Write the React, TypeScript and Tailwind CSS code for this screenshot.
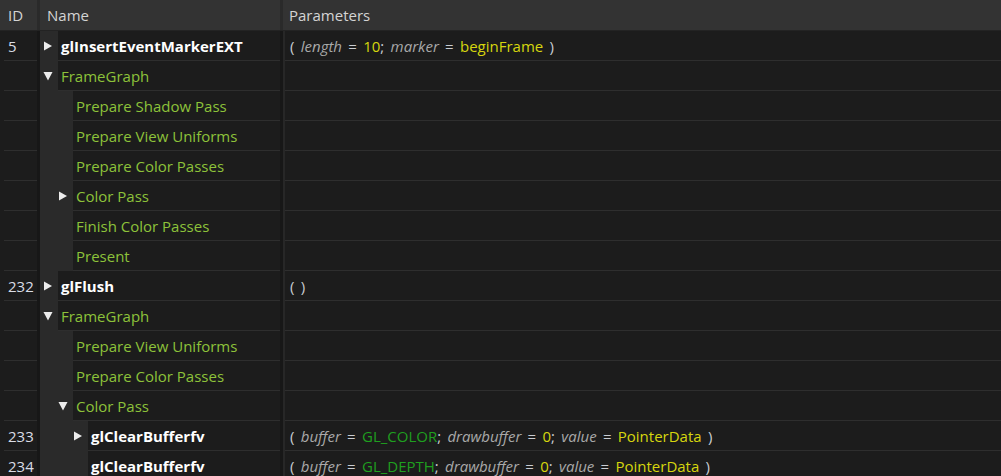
import React from 'react';

type Tok = { t: string; c: 'op' | 'arg' | 'num' | 'enum' };

type Row = {
  id?: string;
  level: number;
  arrow?: 'right' | 'down';
  name: string;
  call?: boolean;
  params?: Tok[];
};

const op = (t: string): Tok => ({ t, c: 'op' });
const arg = (t: string): Tok => ({ t, c: 'arg' });
const num = (t: string): Tok => ({ t, c: 'num' });
const en = (t: string): Tok => ({ t, c: 'enum' });

const clearParams = (buf: string): Tok[] => [
  op('( '), arg('buffer'), op(' = '), en(buf), op('; '), arg('drawbuffer'), op(' = '), num('0'), op('; '),
  arg('value'), op(' = '), num('PointerData'), op(' )'),
];

const ROWS: Row[] = [
  {
    id: '5', level: 0, arrow: 'right', name: 'glInsertEventMarkerEXT', call: true,
    params: [op('( '), arg('length'), op(' = '), num('10'), op('; '), arg('marker'), op(' = '), num('beginFrame'), op(' )')],
  },
  { level: 0, arrow: 'down', name: 'FrameGraph' },
  { level: 1, name: 'Prepare Shadow Pass' },
  { level: 1, name: 'Prepare View Uniforms' },
  { level: 1, name: 'Prepare Color Passes' },
  { level: 1, arrow: 'right', name: 'Color Pass' },
  { level: 1, name: 'Finish Color Passes' },
  { level: 1, name: 'Present' },
  { id: '232', level: 0, arrow: 'right', name: 'glFlush', call: true, params: [op('( )')] },
  { level: 0, arrow: 'down', name: 'FrameGraph' },
  { level: 1, name: 'Prepare View Uniforms' },
  { level: 1, name: 'Prepare Color Passes' },
  { level: 1, arrow: 'down', name: 'Color Pass' },
  { id: '233', level: 2, arrow: 'right', name: 'glClearBufferfv', call: true, params: clearParams('GL_COLOR') },
  { id: '234', level: 2, name: 'glClearBufferfv', call: true, params: clearParams('GL_DEPTH') },
];

const INDENT = [18, 33, 48];

function Arrow({ dir }: { dir: 'right' | 'down' }) {
  if (dir === 'right') {
    return (
      <svg width="10" height="10" viewBox="0 0 10 10" className="shrink-0">
        <polygon points="1,0.5 9,5 1,9.5" fill="#ececec" />
      </svg>
    );
  }
  return (
    <svg width="10" height="10" viewBox="0 0 10 10" className="shrink-0">
      <polygon points="0.5,1 9.5,1 5,9.5" fill="#ececec" />
    </svg>
  );
}

function Params({ toks }: { toks: Tok[] }) {
  return (
    <span className="whitespace-pre [word-spacing:2.4px]">
      {toks.map((k, i) => {
        if (k.c === 'arg') return <span key={i} className="italic text-[#a9a9a9]">{k.t}</span>;
        if (k.c === 'num') return <span key={i} className="text-[#d6d60e]">{k.t}</span>;
        if (k.c === 'enum') return <span key={i} className="text-[#1f9f1f]">{k.t}</span>;
        return <span key={i} className="text-[#c9ccd2]">{k.t}</span>;
      })}
    </span>
  );
}

function TreeRow({ row }: { row: Row }) {
  const indent = INDENT[row.level];
  return (
    <div className="flex h-[30px]">
      <div className="w-[4px] shrink-0" />
      <div className="w-[33px] shrink-0 border-b border-[#2e2e2e] pl-[4px] pt-[1px] flex items-center text-[#d9dde6]">
        {row.id}
      </div>
      <div className="w-[3px] shrink-0 bg-[#171717]" />
      <div className="w-[240px] shrink-0 flex">
        <div className="shrink-0 bg-[#2a2a2a] flex items-center" style={{ width: indent }}>
          {row.arrow && (
            <div className="flex items-center" style={{ marginLeft: indent - 15 }}>
              <Arrow dir={row.arrow} />
            </div>
          )}
        </div>
        <div
          className={
            'flex-1 min-w-0 border-b border-[#2e2e2e] pl-[3px] pt-[1px] flex items-center whitespace-nowrap ' +
            (row.call ? 'font-bold text-white' : 'text-[#8dc23a]')
          }
        >
          {row.name}
        </div>
      </div>
      <div className="w-[3px] shrink-0 bg-[#171717]" />
      <div className="w-[2px] shrink-0 bg-[#272727]" />
      <div className="flex-1 border-b border-[#2e2e2e] pl-[5px] pt-[1px] flex items-center">
        {row.params && <Params toks={row.params} />}
      </div>
    </div>
  );
}

export default function App() {
  return (
    <div
      className="w-[1001px] h-[476px] overflow-hidden bg-[#1c1c1c] text-[15px] leading-none"
      style={{ fontFamily: '"Open Sans", "Noto Sans", sans-serif' }}
    >
      <div className="flex h-[30px] bg-[#333333] text-[#d4d4d4]">
        <div className="w-[37px] shrink-0 pl-[8px] flex items-center">ID</div>
        <div className="w-[3px] shrink-0 bg-[#2a2a2a]" />
        <div className="w-[240px] shrink-0 pl-[7px] flex items-center">Name</div>
        <div className="w-[3px] shrink-0 bg-[#2a2a2a]" />
        <div className="flex-1 pl-[6px] flex items-center">Parameters</div>
      </div>
      <div className="h-[1px] bg-[#232323]" />
      {ROWS.map((r, i) => (
        <TreeRow key={i} row={r} />
      ))}
    </div>
  );
}
